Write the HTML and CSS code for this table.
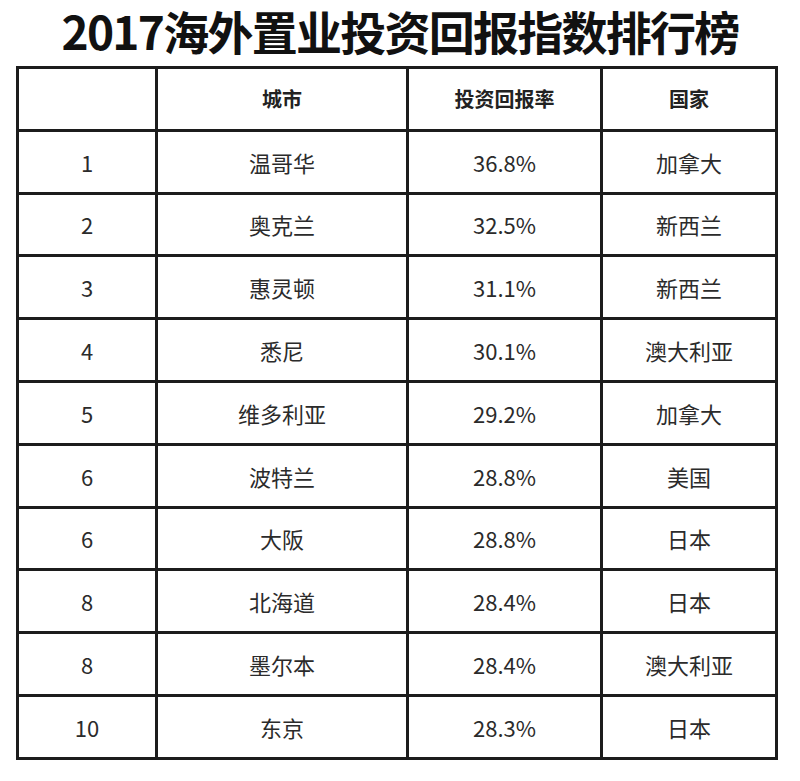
FILE: index.html
```html
<!DOCTYPE html>
<html lang="zh-CN">
<head>
<meta charset="utf-8">
<title>2017海外置业投资回报指数排行榜</title>
<link rel="stylesheet" href="styles.css">
</head>
<body>
<h1 class="title">2017海外置业投资回报指数排行榜</h1>
<table class="rank">
  <colgroup>
    <col class="c-rank">
    <col class="c-city">
    <col class="c-rate">
    <col class="c-country">
  </colgroup>
  <thead>
    <tr><th></th><th>城市</th><th>投资回报率</th><th>国家</th></tr>
  </thead>
  <tbody>
    <tr><td>1</td><td>温哥华</td><td>36.8%</td><td>加拿大</td></tr>
    <tr><td>2</td><td>奥克兰</td><td>32.5%</td><td>新西兰</td></tr>
    <tr><td>3</td><td>惠灵顿</td><td>31.1%</td><td>新西兰</td></tr>
    <tr><td>4</td><td>悉尼</td><td>30.1%</td><td>澳大利亚</td></tr>
    <tr><td>5</td><td>维多利亚</td><td>29.2%</td><td>加拿大</td></tr>
    <tr><td>6</td><td>波特兰</td><td>28.8%</td><td>美国</td></tr>
    <tr><td>6</td><td>大阪</td><td>28.8%</td><td>日本</td></tr>
    <tr><td>8</td><td>北海道</td><td>28.4%</td><td>日本</td></tr>
    <tr><td>8</td><td>墨尔本</td><td>28.4%</td><td>澳大利亚</td></tr>
    <tr><td>10</td><td>东京</td><td>28.3%</td><td>日本</td></tr>
  </tbody>
</table>
</body>
</html>
```
FILE: styles.css
```css
html, body {
  margin: 0;
  padding: 0;
  background: #ffffff;
}
body {
  width: 800px;
  height: 781px;
  overflow: hidden;
  font-family: "Noto Sans CJK SC", "Noto Sans", sans-serif;
  color: #2b2b2b;
}
.title {
  margin: 0;
  height: 66px;
  text-align: center;
  font-size: 46px;
  line-height: 60px;
  font-weight: 700;
  color: #111;
  letter-spacing: -1.75px;
}
.rank {
  margin-left: 16px;
  border-collapse: collapse;
  table-layout: fixed;
  width: 759px;
}
.c-rank { width: 139px; }
.c-city { width: 251px; }
.c-rate { width: 194px; }
.c-country { width: 175px; }
.rank th, .rank td {
  border: 3px solid #1c1c1c;
  text-align: center;
  vertical-align: middle;
  padding: 0;
  height: 59.8px;
  font-size: 22px;
}
.rank th {
  font-weight: 700;
  font-size: 20px;
  color: #222;
}
.rank td {
  font-weight: 400;
}
```
